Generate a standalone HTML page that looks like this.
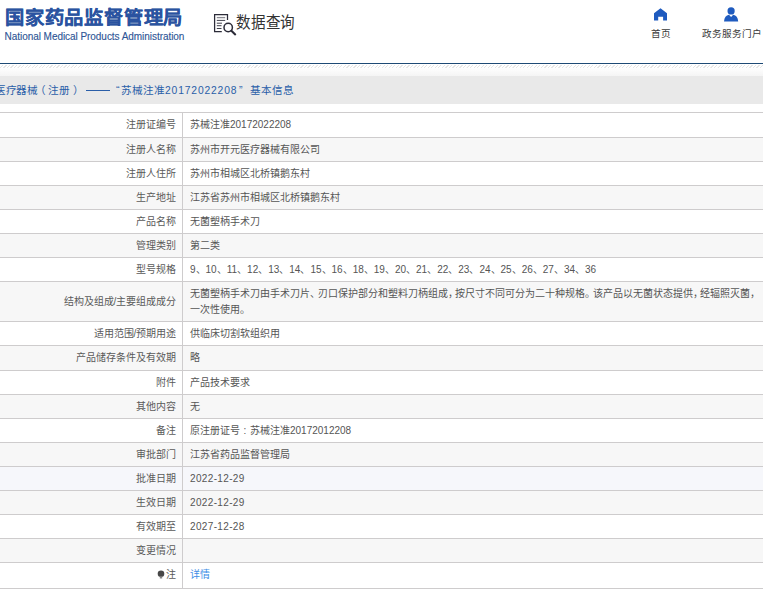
<!DOCTYPE html>
<html lang="zh-CN"><head><meta charset="utf-8">
<style>
*{margin:0;padding:0;box-sizing:border-box}
html,body{width:763px;height:593px;overflow:hidden;background:#fff;font-family:"Liberation Sans",sans-serif;}
.abs{position:absolute}
.logo{position:absolute;left:5px;top:6.5px;font-size:19.5px;font-weight:bold;color:#2a53a0;-webkit-text-stroke:0.2px #2a53a0;white-space:nowrap;line-height:24px;letter-spacing:0px;transform-origin:0 0;transform:scale(0.99,0.91)}
.en{position:absolute;left:4.6px;top:30.5px;font-size:10px;color:#2e5596;-webkit-text-stroke:0.12px #2e5596;letter-spacing:-0.05px;white-space:nowrap;line-height:12px}
.sj{position:absolute;left:236px;top:11.3px;font-size:14.8px;color:#333;white-space:nowrap;line-height:20px;transform-origin:0 0;transform:scale(0.985,1.1)}
.nav{position:absolute;font-size:9.6px;color:#3a3a3a;white-space:nowrap;line-height:12px}
.topline{position:absolute;left:0;top:62.8px;width:763px;height:1.2px;background:#1e4a75}
.hatch{position:absolute;left:0;top:64.8px;width:763px;height:3.2px;
 background:repeating-linear-gradient(135deg,#fff 0,#fff 1.6px,#e6e6e6 1.7px,#e6e6e6 2.5px)}
.grad{position:absolute;left:0;top:68px;width:763px;height:8px;background:linear-gradient(#fefefe,#f5f5f5)}
.band{position:absolute;left:0;top:76px;width:763px;height:28px;background:#e9e9e9}
.title{position:absolute;left:-4px;top:82px;font-size:10.6px;color:#2a5ea8;white-space:nowrap;line-height:16px}
.tdig{font-size:10.3px;letter-spacing:0.85px}
.dash{position:absolute;left:86px;top:89.6px;width:24px;height:1.1px;background:#2a5ea8}
.row{position:absolute;left:0;width:763px;border-top:1px solid #cecccd}
.row.w{background:#fff}
.row.g{background:#f7f7f7}
.row.h{background:#f6f7fb}
.lab{position:absolute;left:0;top:0;width:183.3px;height:100%;border-right:1px solid #cecccd;text-align:right;padding-right:6px;font-size:10px;color:#5a5a5a;line-height:15.8px;padding-top:4.2px;white-space:nowrap}
.row.m .lab{padding-top:12.1px}
.val{position:absolute;left:190px;top:0;width:572px;font-size:10px;color:#555;line-height:15.8px;padding-top:4.2px}
.lnk{color:#3d8ee6}
.p{letter-spacing:-2.5px}
.d{letter-spacing:0.35px}
.colon{display:inline-block;width:10px;text-align:center}
.bulb{vertical-align:-1px;margin-right:1px}
.bottom{position:absolute;left:0;top:588px;width:763px;height:1px;background:#cecccd}
</style></head><body>
<div class="logo">国家药品监督管理局</div>
<div class="en">National Medical Products Administration</div>
<svg class="abs" style="left:212px;top:12px" width="26" height="26" viewBox="212 12 26 26">
 <path d="M221.8 31.5 H214.6 V14.6 H227.5 V20.1" fill="none" stroke="#2b2b38" stroke-width="1.25"/>
 <path d="M216.8 17.6 H225.2" stroke="#8a8a92" stroke-width="1.3"/>
 <path d="M216.8 20.4 H225.2 M216.8 23.2 H222 M216.8 25.7 H221.5 M216.8 28.5 H221.5" stroke="#2b2b38" stroke-width="0.9"/>
 <circle cx="228.2" cy="27.5" r="4.2" fill="#fff" stroke="#2b2b38" stroke-width="1.5"/>
 <path d="M231.4 30.8 L235.2 34.4" stroke="#2b2b38" stroke-width="2.1" stroke-linecap="round"/>
</svg>
<div class="sj">数据查询</div>
<svg class="abs" style="left:650px;top:6px" width="20" height="16" viewBox="650 6 20 16">
 <path d="M654 13.3 L660.5 8.2 L667 13.3 V20.6 H663.1 V16.8 H658.2 V20.6 H654 Z" fill="#1f5bbf"/>
</svg>
<div class="nav" style="left:651.3px;top:27.5px">首页</div>
<svg class="abs" style="left:720px;top:5px" width="22" height="18" viewBox="720 5 22 18">
 <circle cx="731.1" cy="10.9" r="3.6" fill="#1f5bbf"/>
 <path d="M724 21.4 Q724.5 15.5 729 14.7 L731.1 17 L733.2 14.7 Q737.7 15.5 738.2 21.4 Z" fill="#1f5bbf"/>
</svg>
<div class="nav" style="left:701.8px;top:27.5px">政务服务门户</div>
<div class="topline"></div>
<div class="hatch"></div>
<div class="grad"></div>
<div class="band"></div>
<div class="title" style="left:-4.6px;letter-spacing:-0.6px">医疗器械</div>
<div class="title" style="left:34.5px">（</div>
<div class="title" style="left:48px">注册</div>
<div class="title" style="left:73px">）</div>
<div class="dash"></div>
<div class="title" style="left:116px">“</div>
<div class="title" style="left:121px">苏械注准<span class="tdig">20172022208</span></div>
<div class="title" style="left:239px">”</div>
<div class="title" style="left:249.5px">基本信息</div>
<div class="row w" style="top:112px;height:25px"><div class="lab">注册证编号</div><div class="val">苏械注准20172022208</div></div>
<div class="row g" style="top:137px;height:24px"><div class="lab">注册人名称</div><div class="val">苏州市开元医疗器械有限公司</div></div>
<div class="row w" style="top:161px;height:24px"><div class="lab">注册人住所</div><div class="val">苏州市相城区北桥镇鹅东村</div></div>
<div class="row g" style="top:185px;height:24px"><div class="lab">生产地址</div><div class="val">江苏省苏州市相城区北桥镇鹅东村</div></div>
<div class="row w" style="top:209px;height:24px"><div class="lab">产品名称</div><div class="val">无菌塑柄手术刀</div></div>
<div class="row g" style="top:233px;height:24px"><div class="lab">管理类别</div><div class="val">第二类</div></div>
<div class="row w" style="top:257px;height:24px"><div class="lab">型号规格</div><div class="val">9、10、11、12、13、14、15、16、18、19、20、21、22、23、24、25、26、27、34、36</div></div>
<div class="row g m" style="top:281px;height:40px"><div class="lab">结构及组成/主要组成成分</div><div class="val">无菌塑柄手术刀由手术刀片<span class="p">、</span>刃口保护部分和塑料刀柄组成<span class="p">，</span>按尺寸不同可分为二十种规格<span class="p">。</span>该产品以无菌状态提供<span class="p">，</span>经辐照灭菌<span class="p">，</span>一次性使用<span class="p">。</span></div></div>
<div class="row w" style="top:321px;height:24px"><div class="lab">适用范围/预期用途</div><div class="val">供临床切割软组织用</div></div>
<div class="row g" style="top:345px;height:25px"><div class="lab">产品储存条件及有效期</div><div class="val">略</div></div>
<div class="row w" style="top:370px;height:24px"><div class="lab">附件</div><div class="val">产品技术要求</div></div>
<div class="row g" style="top:394px;height:24px"><div class="lab">其他内容</div><div class="val">无</div></div>
<div class="row w" style="top:418px;height:24px"><div class="lab">备注</div><div class="val">原注册证号<span class="colon">:</span>苏械注准20172012208</div></div>
<div class="row g" style="top:442px;height:24px"><div class="lab">审批部门</div><div class="val">江苏省药品监督管理局</div></div>
<div class="row h" style="top:466px;height:24px"><div class="lab">批准日期</div><div class="val"><span class="d">2022-12-29</span></div></div>
<div class="row g" style="top:490px;height:24px"><div class="lab">生效日期</div><div class="val"><span class="d">2022-12-29</span></div></div>
<div class="row w" style="top:514px;height:24px"><div class="lab">有效期至</div><div class="val"><span class="d">2027-12-28</span></div></div>
<div class="row g" style="top:538px;height:24px"><div class="lab">变更情况</div><div class="val"></div></div>
<div class="row w" style="top:562px;height:26px"><div class="lab"><svg class="bulb" width="8" height="9" viewBox="0 0 8 9"><circle cx="4" cy="3.7" r="3.3" fill="#474747"/><rect x="2.8" y="6.4" width="2.4" height="2.1" fill="#888"/></svg>注</div><div class="val"><span class="lnk">详情</span></div></div>
<div class="bottom"></div>
</body></html>
